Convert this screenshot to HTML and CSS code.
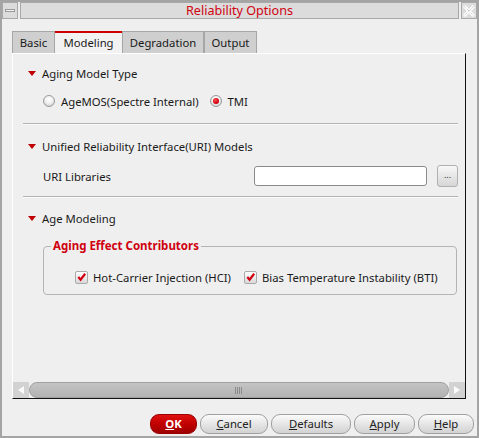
FILE: index.html
```html
<!DOCTYPE html>
<html>
<head>
<meta charset="utf-8">
<link rel="stylesheet" href="styles.css">
</head>
<body>
<div class="window">
  <div class="titlebar">
    <div class="tbtn"><span class="dash"></span></div>
    <div class="title">Reliability Options</div>
    <div class="tbtn close"><svg width="12" height="12" viewBox="0 0 12 12"><path d="M1 1L11 11M11 1L1 11" stroke="#fff" stroke-width="3"/><path d="M1 1L11 11M11 1L1 11" stroke="#bbb" stroke-width="1" stroke-dasharray="1 1"/></svg></div>
  </div>
  <div class="content">
    <div class="tabs">
      <div class="tab t1">Basic</div>
      <div class="tab t2 active">Modeling</div>
      <div class="tab t3">Degradation</div>
      <div class="tab t4">Output</div>
    </div>
    <div class="panel">
      <div class="inner">
        <div class="hdr h1"><span class="tri"></span>Aging Model Type</div>
        <div class="radios">
          <span class="radio"></span><span class="rlabel">AgeMOS(Spectre Internal)</span>
          <span class="radio on"></span><span class="rlabel">TMI</span>
        </div>
        <div class="sep s1"></div>
        <div class="hdr h2"><span class="tri"></span>Unified Reliability Interface(URI) Models</div>
        <div class="urirow">
          <span class="urilabel">URI Libraries</span>
          <span class="field"></span>
          <span class="dots">...</span>
        </div>
        <div class="sep s2"></div>
        <div class="hdr h3"><span class="tri"></span>Age Modeling</div>
        <fieldset class="group">
          <legend>Aging Effect Contributors</legend>
          <div class="checks">
            <span class="cb"><svg width="12" height="12" viewBox="0 0 12 12"><path d="M2.5 6L5 9L10 2.5" fill="none" stroke="#d00010" stroke-width="2.4"/></svg></span><span class="clabel">Hot-Carrier Injection (HCI)</span>
            <span class="cb"><svg width="12" height="12" viewBox="0 0 12 12"><path d="M2.5 6L5 9L10 2.5" fill="none" stroke="#d00010" stroke-width="2.4"/></svg></span><span class="clabel">Bias Temperature Instability (BTI)</span>
          </div>
        </fieldset>
      </div>
      <div class="hscroll">
        <div class="arrow"><svg width="10" height="10" viewBox="0 0 10 10"><path d="M8 1L2 5L8 9Z" fill="#fafafa"/></svg></div>
        <div class="thumb"><span class="grip"></span></div>
        <div class="arrow"><svg width="10" height="10" viewBox="0 0 10 10"><path d="M2 1L8 5L2 9Z" fill="#fafafa"/></svg></div>
      </div>
    </div>
    <div class="buttons">
      <div class="btn ok"><u>O</u>K</div>
      <div class="btn cancel"><u>C</u>ancel</div>
      <div class="btn defaults"><u>D</u>efaults</div>
      <div class="btn apply"><u>A</u>pply</div>
      <div class="btn help"><u>H</u>elp</div>
    </div>
  </div>
</div>
</body>
</html>
```

FILE: styles.css
```css
* { box-sizing: border-box; }
html, body { margin: 0; padding: 0; }
body {
  background: #efefef;
  font-family: "Noto Sans", "DejaVu Sans", sans-serif;
  font-size: 11.3px;
  color: #1a1a1a;
}
.window {
  width: 479px;
  height: 438px;
  border: 2px solid #a4a4a4;
  background: #efefef;
}
.titlebar {
  display: flex;
  gap: 2px;
  height: 17px;
}
.tbtn {
  width: 16px;
  height: 17px;
  border: 1px solid #a8a8a8;
  background: #dcdcdc;
  display: flex;
  align-items: center;
  justify-content: center;
}
.dash {
  width: 10px;
  height: 3px;
  border: 1px solid #999;
  background: #f4f4f4;
}
.title {
  flex: 1;
  height: 17px;
  border: 1px solid #a8a8a8;
  background: #dcdcdc;
  color: #d00010;
  font-size: 12.6px;
  line-height: 15px;
  text-align: center;
}
.content {
  padding: 12px 3px 0 10px;
}
.tabs {
  display: flex;
  height: 22px;
}
.tab {
  height: 22px;
  border: 1px solid #a6a6a6;
  border-bottom: none;
  background: #cfcfcf;
  line-height: 22px;
  text-align: center;
  white-space: nowrap;
}
.t1 { width: 43px; }
.t2 { width: 67px; }
.t3 { width: 82px; }
.t4 { width: 53px; }
.tab.active {
  background: #f2f2f2;
  border-top: 2px solid #cc0000;
  line-height: 20px;
  border-left: none;
  border-right: none;
}
.panel {
  width: 454px;
  height: 346px;
  border-top: 1px solid #ffffff;
  border-left: 1px solid #ffffff;
  border-right: 1px solid #111;
  border-bottom: 1px solid #111;
  display: flex;
  flex-direction: column;
}
.inner {
  flex: 1;
  padding: 0 7px 0 10px;
}
.hdr {
  height: 22px;
  display: flex;
  align-items: center;
  padding-left: 5px;
  white-space: nowrap;
}
.tri {
  width: 0;
  height: 0;
  border-left: 4px solid transparent;
  border-right: 4px solid transparent;
  border-top: 5px solid #c00000;
  margin-right: 6px;
}
.h1 { margin-top: 8px; }
.h2 { margin-top: 10px; }
.h3 { margin-top: 9px; }
.radios {
  margin-top: 6px;
  height: 22px;
  display: flex;
  align-items: center;
  padding-left: 20px;
  white-space: nowrap;
}
.radio {
  width: 12px;
  height: 12px;
  border-radius: 50%;
  border: 1px solid #9a9a9a;
  background: radial-gradient(circle at 50% 35%, #ffffff 0%, #f0f0f0 45%, #c4c4c4 100%);
  margin-right: 6px;
  display: flex;
  align-items: center;
  justify-content: center;
  flex-shrink: 0;
}
.radio.on::after {
  content: "";
  width: 6px;
  height: 6px;
  border-radius: 50%;
  background: radial-gradient(circle at 40% 35%, #ff5050, #d00010 60%, #a00000);
}
.rlabel { margin-right: 11px; }
.sep {
  height: 2px;
  border-top: 1px solid #b4b4b4;
  border-bottom: 1px solid #fafafa;
}
.s1 { margin-top: 11px; }
.s2 { margin-top: 9px; }
.urirow {
  margin-top: 8px;
  height: 22px;
  display: flex;
  align-items: center;
  padding-left: 20px;
}
.urilabel { width: 211px; }
.field {
  width: 173px;
  height: 20px;
  border: 1px solid #8a8a8a;
  border-radius: 3px;
  background: #fff;
}
.dots {
  margin-left: 10px;
  width: 21px;
  height: 22px;
  border: 1px solid #b0b0b0;
  border-radius: 3px;
  background: linear-gradient(#f8f8f8, #d6d6d6);
  font-size: 9px;
  line-height: 18px;
  text-align: center;
  color: #333;
}
.group {
  margin: 10px 0 0 20px;
  width: 414px;
  height: 56px;
  padding: 0;
  border: 1px solid #b4b4b4;
  border-radius: 4px;
}
.group legend {
  margin-left: 7px;
  padding: 0 2px;
  color: #d00010;
  font-weight: bold;
  font-size: 11.5px;
  line-height: 14px;
}
.checks {
  display: flex;
  align-items: center;
  padding-left: 31px;
  margin-top: 14px;
  height: 20px;
  white-space: nowrap;
}
.cb {
  width: 13px;
  height: 13px;
  border: 1px solid #aaa;
  border-radius: 2px;
  background: linear-gradient(#ffffff, #d8d8d8);
  margin-right: 5px;
  display: flex;
  align-items: center;
  justify-content: center;
  flex-shrink: 0;
}
.clabel { margin-right: 13px; }
.hscroll {
  height: 16px;
  display: flex;
  margin-bottom: 0;
}
.arrow {
  width: 16px;
  height: 16px;
  background: #d2d2d2;
  display: flex;
  align-items: center;
  justify-content: center;
}
.thumb {
  flex: 1;
  height: 16px;
  border: 1px solid #a0a0a0;
  border-radius: 8px;
  background: linear-gradient(#c4c4c4, #b2b2b2);
  display: flex;
  align-items: center;
  justify-content: center;
}
.grip {
  width: 8px;
  height: 7px;
  background: repeating-linear-gradient(90deg, #8a8a8a 0 1px, transparent 1px 2px);
}
.buttons {
  margin-top: 15px;
  display: flex;
  justify-content: flex-end;
  gap: 3px;
}
.btn {
  height: 20px;
  border: 1px solid #a0a0a0;
  border-radius: 9px;
  background: linear-gradient(#fbfbfb, #e6e6e6 50%, #d2d2d2);
  text-align: center;
  line-height: 18px;
  color: #222;
}
.btn u { text-decoration: underline; }
.ok {
  width: 47px;
  background: linear-gradient(#e01010, #c00000 50%, #a00000);
  border-color: #900;
  color: #fff;
  font-weight: bold;
}
.cancel { width: 68px; }
.defaults { width: 80px; }
.apply { width: 61px; }
.help { width: 56px; }
```
